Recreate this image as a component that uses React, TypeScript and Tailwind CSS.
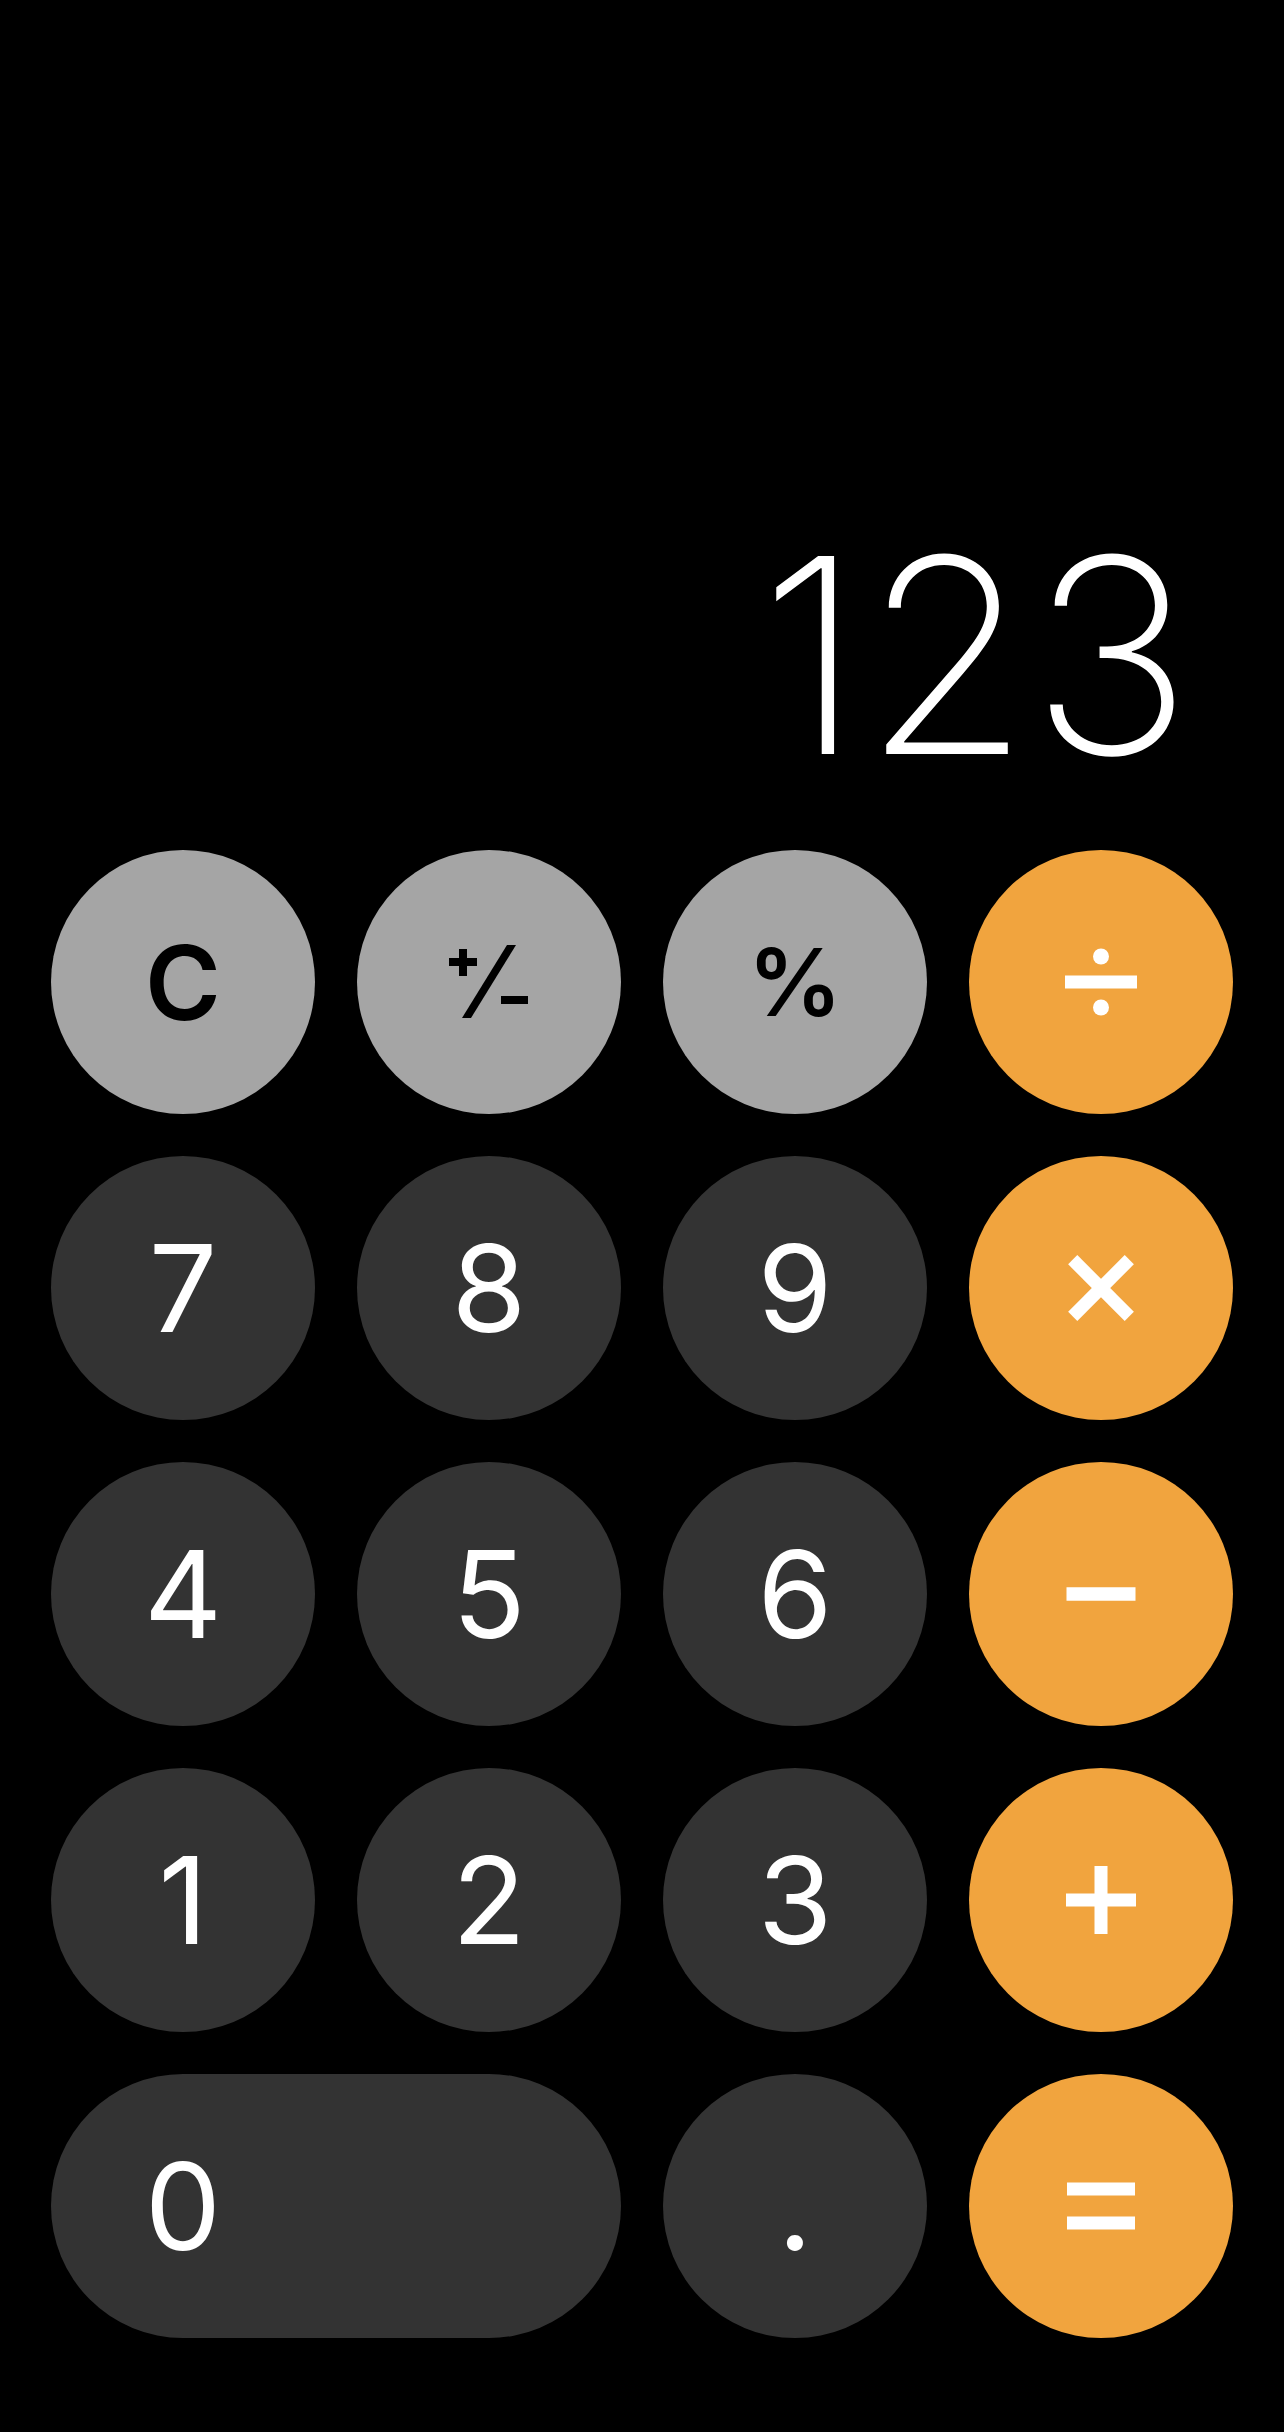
import type { ReactNode } from 'react';

type Variant = 'fn' | 'num' | 'op';

const variantClass: Record<Variant, string> = {
  fn: 'bg-[#a5a5a5] text-black text-[103px] font-semibold',
  num: 'bg-[#333333] text-white text-[121px] font-normal',
  op: 'bg-[#f1a43e] text-white',
};

function Key({ children, variant, wide = false }: { children: ReactNode; variant: Variant; wide?: boolean }) {
  if (wide) {
    return (
      <button className={`col-span-2 flex h-[264px] items-center rounded-full leading-none ${variantClass[variant]}`}>
        <span className="flex w-[264px] justify-center">{children}</span>
      </button>
    );
  }
  return (
    <button className={`flex h-[264px] w-[264px] items-center justify-center rounded-full leading-none ${variantClass[variant]}`}>
      {children}
    </button>
  );
}

// operator glyphs, drawn with square ends like the iOS keypad
const Divide = () => (
  <svg width="80" height="80" viewBox="0 0 80 80" fill="white" aria-label="divide">
    <rect x="4" y="33.5" width="72" height="13" />
    <circle cx="40" cy="14.5" r="8" />
    <circle cx="40" cy="65.5" r="8" />
  </svg>
);

const Times = () => (
  <svg width="80" height="80" viewBox="0 0 80 80" fill="white" aria-label="multiply">
    <rect x="0" y="33.5" width="80" height="13" transform="rotate(45 40 40)" />
    <rect x="0" y="33.5" width="80" height="13" transform="rotate(-45 40 40)" />
  </svg>
);

const MinusIcon = () => (
  <svg width="80" height="80" viewBox="0 0 80 80" fill="white" aria-label="minus">
    <rect x="5.5" y="33.25" width="69" height="13.5" />
  </svg>
);

const PlusIcon = () => (
  <svg width="80" height="80" viewBox="0 0 80 80" fill="white" aria-label="plus">
    <rect x="5" y="33.5" width="70" height="13" />
    <rect x="33.5" y="6" width="13" height="68" />
  </svg>
);

const EqualsIcon = () => (
  <svg width="80" height="80" viewBox="0 0 80 80" fill="white" aria-label="equals">
    <rect x="6" y="16.5" width="68" height="13" />
    <rect x="6" y="50.5" width="68" height="13" />
  </svg>
);

// +/- sign: small raised plus, slash, small lowered minus
const PlusMinus = () => (
  <svg width="82" height="74" viewBox="0 0 82 74" fill="black" aria-label="plus minus">
    <rect x="1" y="13" width="28" height="8" />
    <rect x="11" y="4" width="8" height="27" />
    <polygon points="59,0 68,0 23,73 14,73" />
    <rect x="53" y="51" width="27" height="8" />
  </svg>
);

export default function App() {
  return (
    <div className="flex h-[2432px] w-full flex-col justify-end bg-black px-[51px] pb-[94px] font-['Inter',sans-serif]">
      <div className="mb-[59px] pr-[41px] text-right text-[272px] font-extralight leading-none text-white">123</div>
      <div className="grid grid-cols-[repeat(4,264px)] gap-[42px]">
        <Key variant="fn">C</Key>
        <Key variant="fn">
          <PlusMinus />
        </Key>
        <Key variant="fn">
          <span className="text-[94px]">%</span>
        </Key>
        <Key variant="op">
          <Divide />
        </Key>

        <Key variant="num">7</Key>
        <Key variant="num">8</Key>
        <Key variant="num">9</Key>
        <Key variant="op">
          <Times />
        </Key>

        <Key variant="num">4</Key>
        <Key variant="num">5</Key>
        <Key variant="num">6</Key>
        <Key variant="op">
          <MinusIcon />
        </Key>

        <Key variant="num">1</Key>
        <Key variant="num">2</Key>
        <Key variant="num">3</Key>
        <Key variant="op">
          <PlusIcon />
        </Key>

        <Key variant="num" wide>
          0
        </Key>
        <Key variant="num">.</Key>
        <Key variant="op">
          <EqualsIcon />
        </Key>
      </div>
    </div>
  );
}
